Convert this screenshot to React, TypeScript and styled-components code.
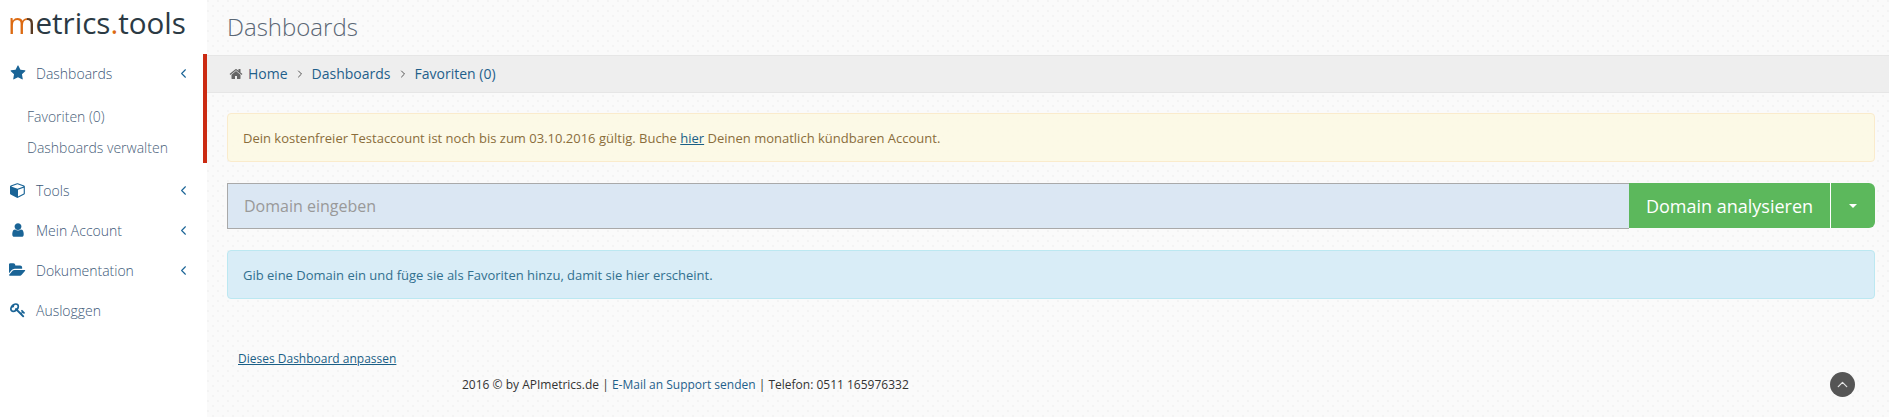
import React from "react";
import styled, { createGlobalStyle } from "styled-components";
import { ChevronLeft, ChevronRight, ChevronUp } from "lucide-react";

const Global = createGlobalStyle`
  html, body { margin: 0; padding: 0; height: 417px; overflow: hidden; }
  body { font-family: "Open Sans", sans-serif; color: #333; }
  * { box-sizing: border-box; }
`;

const paths: Record<string, { d: string; w: number }> = {
  star: { w: 1792, d: "M1728 647q0 22-26 48l-363 354 86 500q1 7 1 20 0 21-10.5 35.5t-30.5 14.5q-19 0-40-12l-449-236-449 236q-22 12-40 12-21 0-31.5-14.5t-10.5-35.5q0-6 2-20l86-500-364-354q-25-27-25-48 0-37 56-46l502-73 225-455q19-41 49-41t49 41l225 455 502 73q56 9 56 46z" },
  cube: { w: 1792, d: "M896 1629l640-349v-636l-640 233v752zm-64-865l698-254-698-254-698 254zm832-252v768q0 35-18 65t-49 47l-704 384q-28 16-61 16t-61-16l-704-384q-31-17-49-47t-18-65v-768q0-40 23-73t61-47l704-256q22-8 44-8t44 8l704 256q38 14 61 47t23 73z" },
  user: { w: 1792, d: "M1536 1399q0 109-62.5 187t-150.5 78h-854q-88 0-150.5-78t-62.5-187q0-85 8.5-160.5t31.5-152 58.5-131 94-89 134.5-34.5q131 128 313 128t313-128q76 0 134.5 34.5t94 89 58.5 131 31.5 152 8.5 160.5zm-256-887q0 159-112.5 271.5t-271.5 112.5-271.5-112.5-112.5-271.5 112.5-271.5 271.5-112.5 271.5 112.5 112.5 271.5z" },
  folder: { w: 1920, d: "M1815 952q0 31-31 66l-336 396q-43 51-120.5 86.5t-143.5 35.5h-1088q-34 0-60.5-13t-26.5-43q0-31 31-66l336-396q43-51 120.5-86.5t143.5-35.5h1088q34 0 60.5 13t26.5 43zm-343-344v160h-832q-94 0-197 47.5t-164 119.5l-337 396-5 6q0-4-.5-12.5t-.5-12.5v-960q0-92 66-158t158-66h320q92 0 158 66t66 158v32h544q92 0 158 66t66 158z" },
  key: { w: 1792, d: "M832 512q0-80-56-136t-136-56-136 56-56 136q0 42 19 83-41-19-83-19-80 0-136 56t-56 136 56 136 136 56 136-56 56-136q0-42-19-83 41 19 83 19 80 0 136-56t56-136zm851 704q0 17-49 66t-66 49q-9 0-28.5-16t-36.5-33-38.5-40-24.5-26l-96 96 220 220q28 28 28 68 0 42-39 81t-81 39q-40 0-68-28l-671-671q-176 131-365 131-163 0-265.5-102.5t-102.5-265.5q0-160 95-313t248-248 313-95q163 0 265.5 102.5t102.5 265.5q0 189-131 365l355 355 96-96q-2-3-26-24.5t-40-38.5-33-36.5-16-28.5q0-17 49-66t66-49q13 0 23 10 6 6 46 44.5t82 79.5 86.5 86 73 78 28.5 41z" },
  home: { w: 1792, d: "M1472 992v480q0 26-19 45t-45 19h-384v-384h-256v384h-384q-26 0-45-19t-19-45v-480q0-1 .5-3t.5-3l575-474 575 474q1 2 1 6zm223-69l-62 74q-8 9-21 11h-3q-13 0-21-7l-692-577-692 577q-12 8-24 7-13-2-21-11l-62-74q-8-10-7-23.5t11-21.5l719-599q32-26 76-26t76 26l244 204v-195q0-14 9-23t23-9h192q14 0 23 9t9 23v408l219 182q10 8 11 21.5t-7 23.5z" },
};

const Glyph = ({ name, size }: { name: string; size: number }) => (
  <svg width={(size * paths[name].w) / 1792} height={size} viewBox={`0 0 ${paths[name].w} 1792`} fill="currentColor">
    <path d={paths[name].d} />
  </svg>
);

const Page = styled.div`
  display: flex;
  width: 1889px;
  height: 417px;
  background: #fff;
`;

const Sidebar = styled.aside`
  width: 207px;
  flex: none;
  display: flex;
  flex-direction: column;
`;

const Logo = styled.div`
  height: 54px;
  padding: 2px 0 0 8px;
  font-size: 29.6px;
  line-height: 42px;
  font-weight: 400;
  color: #2b3a44;
  white-space: nowrap;
`;

const LogoM = styled.span`
  background: linear-gradient(90deg, #dc6a12 0 72%, #5a3a22 72% 100%);
  -webkit-background-clip: text;
  background-clip: text;
  color: transparent;
`;

const Accent = styled.span`
  color: #dc6a12;
`;

const ActiveGroup = styled.div`
  height: 109px;
  border-right: 4px solid #cb2a12;
  margin-bottom: 8px;
`;

const NavRow = styled.div`
  height: 40px;
  width: 203px;
  display: flex;
  align-items: center;
  padding-bottom: 2px;
  font-size: 14px;
  font-weight: 300;
  color: #3d5878;
`;

const NavIconCell = styled.span`
  width: 36px;
  flex: none;
  display: flex;
  justify-content: center;
  color: #1a6496;
`;

const NavLabel = styled.span`
  flex: 1;
`;

const NavArrow = styled(ChevronLeft)`
  color: #1a6496;
  margin-right: 12px;
`;

const SubList = styled.div`
  padding-top: 7px;
`;

const SubItem = styled.div`
  height: 31px;
  line-height: 31px;
  padding-left: 27px;
  font-size: 14px;
  font-weight: 300;
  color: #4a5f7a;
`;

const Main = styled.main`
  flex: 1;
  min-width: 0;
  display: flex;
  flex-direction: column;
  background-color: #fafafa;
  background-image:
    radial-gradient(circle at 1px 1px, #f3f3f3 0.7px, transparent 1px),
    radial-gradient(circle at 6px 6px, #f3f3f3 0.7px, transparent 1px);
  background-size: 10px 10px;
`;

const Title = styled.h1`
  height: 55px;
  margin: 0;
  padding: 5px 0 0 20px;
  font-size: 24px;
  line-height: 44px;
  font-weight: 300;
  color: #5a6775;
`;

const Breadcrumb = styled.nav`
  height: 38px;
  display: flex;
  align-items: center;
  padding-left: 22px;
  padding-bottom: 1px;
  background: #eeeeee;
  border-top: 1px solid #e6e6e6;
  border-bottom: 1px solid #e6e6e6;
  font-size: 14px;
  color: #1f5f8b;
`;

const HomeIconCell = styled.span`
  display: flex;
  color: #666;
  margin-right: 5px;
`;

const Separator = styled(ChevronRight)`
  color: #555;
  margin: 0 6px 0 6px;
`;

const Content = styled.div`
  padding: 20px 14px 0 20px;
  display: flex;
  flex-direction: column;
  gap: 21px;
`;

const Alert = styled.div<{ $tone: "warning" | "info" }>`
  height: 49px;
  display: flex;
  align-items: center;
  padding-left: 15px;
  font-size: 13px;
  border-radius: 4px;
  border: 1px solid ${(p) => (p.$tone === "warning" ? "#faebcc" : "#bce8f1")};
  background: ${(p) => (p.$tone === "warning" ? "rgba(252,248,227,.9)" : "#d9edf7")};
  color: ${(p) => (p.$tone === "warning" ? "#8a6d3b" : "#31708f")};
  white-space: pre;
`;

const AlertLink = styled.a`
  color: #1a5f86;
  text-decoration: underline;
`;

const SearchRow = styled.div`
  height: 46px;
  display: flex;
`;

const DomainField = styled.input`
  flex: 1;
  min-width: 0;
  height: 46px;
  padding: 0 16px 0 16px;
  background: #dbe7f3;
  border: 1px solid #a9a9a9;
  border-right: 0;
  border-radius: 0;
  font-family: inherit;
  font-size: 16px;
  outline: none;
  &::placeholder { color: #999; opacity: 1; }
`;

const GreenButton = styled.button`
  height: 45px;
  background: #5cb85c;
  color: #fff;
  border: 0;
  font-family: inherit;
  font-size: 18px;
  padding: 0;
`;

const AnalyzeButton = styled(GreenButton)`
  width: 201px;
`;

const CaretButton = styled(GreenButton)`
  width: 45px;
  border-left: 1px solid #fff;
  border-radius: 0 6px 6px 0;
  display: flex;
  align-items: center;
  justify-content: center;
`;

const Caret = styled.span`
  width: 0;
  height: 0;
  border-left: 4.5px solid transparent;
  border-right: 4.5px solid transparent;
  border-top: 4.5px solid #fff;
`;

const CustomizeLink = styled.a`
  display: block;
  margin: 51px 0 0 31px;
  font-size: 12px;
  line-height: 18px;
  color: #1a5f86;
  text-decoration: underline;
`;

const Footer = styled.footer`
  display: flex;
  align-items: center;
  margin-top: 1px;
  padding: 0 34px 0 255px;
  height: 30px;
  font-size: 12px;
  color: #333;
`;

const FooterText = styled.span`
  flex: 1;
`;

const FooterLink = styled.a`
  color: #1f5f8b;
`;

const TopButton = styled.span`
  width: 25px;
  height: 25px;
  border-radius: 50%;
  background: #555;
  color: #e4e4e4;
  display: flex;
  align-items: center;
  justify-content: center;
`;

const items = [
  { icon: "cube", size: 16, label: "Tools", arrow: true },
  { icon: "user", size: 16, label: "Mein Account", arrow: true },
  { icon: "folder", size: 16, label: "Dokumentation", arrow: true },
  { icon: "key", size: 16, label: "Ausloggen", arrow: false },
];

export default function App() {
  return (
    <>
      <Global />
      <Page>
        <Sidebar>
          <Logo>
            <LogoM>m</LogoM>etrics<Accent>.</Accent>tools
          </Logo>
          <ActiveGroup>
            <NavRow>
              <NavIconCell><Glyph name="star" size={16} /></NavIconCell>
              <NavLabel>Dashboards</NavLabel>
              <NavArrow size={15} strokeWidth={1.75} />
            </NavRow>
            <SubList>
              <SubItem>Favoriten (0)</SubItem>
              <SubItem>Dashboards verwalten</SubItem>
            </SubList>
          </ActiveGroup>
          {items.map((it) => (
            <NavRow key={it.label}>
              <NavIconCell><Glyph name={it.icon} size={it.size} /></NavIconCell>
              <NavLabel>{it.label}</NavLabel>
              {it.arrow && <NavArrow size={15} strokeWidth={1.75} />}
            </NavRow>
          ))}
        </Sidebar>
        <Main>
          <Title>Dashboards</Title>
          <Breadcrumb>
            <HomeIconCell><Glyph name="home" size={14} /></HomeIconCell>
            Home
            <Separator size={12} strokeWidth={2} />
            Dashboards
            <Separator size={12} strokeWidth={2} />
            Favoriten (0)
          </Breadcrumb>
          <Content>
            <Alert $tone="warning">
              Dein kostenfreier Testaccount ist noch bis zum 03.10.2016 gültig. Buche <AlertLink>hier</AlertLink> Deinen monatlich kündbaren Account.
            </Alert>
            <SearchRow>
              <DomainField placeholder="Domain eingeben" />
              <AnalyzeButton>Domain analysieren</AnalyzeButton>
              <CaretButton><Caret /></CaretButton>
            </SearchRow>
            <Alert $tone="info">Gib eine Domain ein und füge sie als Favoriten hinzu, damit sie hier erscheint.</Alert>
          </Content>
          <CustomizeLink>Dieses Dashboard anpassen</CustomizeLink>
          <Footer>
            <FooterText>
              2016 © by APImetrics.de | <FooterLink>E-Mail an Support senden</FooterLink> | Telefon: 0511 165976332
            </FooterText>
            <TopButton><ChevronUp size={17} strokeWidth={1.75} /></TopButton>
          </Footer>
        </Main>
      </Page>
    </>
  );
}
